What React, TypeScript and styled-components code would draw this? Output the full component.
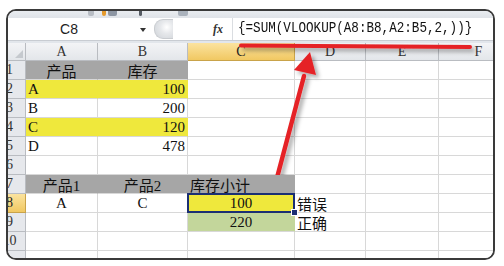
import React from 'react'
import styled, { createGlobalStyle, css } from 'styled-components'

const GlobalStyle = createGlobalStyle`
  html, body {
    margin: 0;
    padding: 0;
    background: #ffffff;
  }
`

const CELL_FONT = `"Liberation Serif", "Noto Sans CJK SC", serif`
const GRID_LINE = '#d8d8d8'
const HEADER_LINE = '#b9bcc1'

const Page = styled.div`
  position: relative;
  width: 504px;
  height: 266px;
  box-sizing: border-box;
  padding: 9px 9px 6px 6px;
  overflow: hidden;
`

const Frame = styled.div`
  height: 100%;
  box-sizing: border-box;
  border: 2px solid #3a3a3a;
  border-radius: 10px;
  overflow: hidden;
  display: flex;
  flex-flow: column nowrap;
  background: #ffffff;
`

const ToolStrip = styled.div`
  height: 7px;
  flex: none;
  display: flex;
  align-items: flex-start;
  gap: 6px;
  padding-left: 80px;
  background: linear-gradient(#e9ecf0, #dfe3e8);
`

const ToolBit = styled.span<{ $w: number; $c: string; $ml?: number }>`
  display: block;
  width: ${p => p.$w}px;
  height: 5px;
  margin-left: ${p => p.$ml ?? 0}px;
  background: ${p => p.$c};
  border-radius: 0 0 2px 2px;
`

const FormulaBar = styled.div`
  height: 22px;
  flex: none;
  display: flex;
  align-items: center;
  background: #ffffff;
  border-bottom: 1px solid #c8ccd2;
`

const NameBox = styled.div`
  position: relative;
  width: 142px;
  height: 100%;
  display: flex;
  align-items: center;
  justify-content: center;
  font-family: "Liberation Sans", Arial, sans-serif;
  font-size: 14px;
  color: #222;
  padding-right: 20px;
  box-sizing: border-box;
`

const DropArrow = styled.span`
  position: absolute;
  right: 4px;
  top: 10px;
  width: 0;
  height: 0;
  border-left: 3.5px solid transparent;
  border-right: 3.5px solid transparent;
  border-top: 4px solid #333;
`

const Grip = styled.div`
  width: 18px;
  height: 18px;
  margin-left: 4px;
  border-radius: 9px 0 0 9px;
  border: 1px solid #c9ccd0;
  border-right: none;
  background: radial-gradient(circle at 65% 40%, #ffffff 0, #e6e8eb 40%, #cfd3d8 100%);
`

const FxButton = styled.div`
  width: 60px;
  height: 100%;
  display: flex;
  align-items: center;
  justify-content: flex-end;
  padding-right: 9px;
  box-sizing: border-box;
  font-family: "Liberation Serif", serif;
  font-style: italic;
  font-weight: bold;
  font-size: 12px;
  color: #333;
  border-right: 1px solid #dadde1;
`

const FormulaText = styled.div`
  flex: 1;
  padding-left: 5px;
  font-family: "Liberation Mono", monospace;
  font-size: 12.6px;
  color: #111;
  white-space: nowrap;
  transform: scaleY(1.15);
`

const Gap = styled.div`
  height: 2px;
  flex: none;
  background: #e2e6eb;
`

const Sheet = styled.div`
  display: grid;
  grid-template-columns: 28px 72px 90px 107px 71px 73px 80px;
  grid-template-rows: 18px repeat(11, 19px);
  margin-left: -10px;
`

const Header = styled.div<{ $active?: boolean; $row?: boolean }>`
  box-sizing: border-box;
  display: flex;
  align-items: center;
  justify-content: center;
  font-family: "Liberation Serif", serif;
  font-size: 14px;
  color: #333;
  border-right: 1px solid ${HEADER_LINE};
  border-bottom: 1px solid ${HEADER_LINE};
  background: linear-gradient(#f3f4f6, #e3e6ea);
  ${p => p.$row && css`
    background: #e6e8ec;
    padding-right: 4px;
  `}
  ${p => p.$active && css`
    background: linear-gradient(#fbe39f, #f1c862);
    border-color: #c9a34a;
    color: #222;
  `}
`

const Corner = styled(Header)`
  position: relative;
  &::after {
    content: '';
    position: absolute;
    right: 2px;
    bottom: 2px;
    border-left: 8px solid transparent;
    border-bottom: 8px solid #c5c9ce;
  }
`

type Align = 'left' | 'center' | 'right'

const Cell = styled.div<{ $bg?: string; $align?: Align; $spill?: boolean }>`
  position: relative;
  box-sizing: border-box;
  display: flex;
  align-items: center;
  justify-content: ${p => (p.$align === 'right' ? 'flex-end' : p.$align === 'center' ? 'center' : 'flex-start')};
  padding: 0 2px;
  font-family: ${CELL_FONT};
  font-size: 15px;
  color: #111;
  white-space: nowrap;
  background: ${p => p.$bg ?? '#ffffff'};
  border-right: 1px solid ${p => (p.$bg ? p.$bg : GRID_LINE)};
  border-bottom: 1px solid ${GRID_LINE};
  ${p => p.$spill && css`
    overflow: visible;
    z-index: 1;
  `}
`

const ActiveCell = styled(Cell)`
  border: 2px solid #1b2f73;
  margin: -1px 0 0 -1px;
  z-index: 2;

  &::after {
    content: '';
    position: absolute;
    right: -5px;
    bottom: -5px;
    width: 5px;
    height: 5px;
    background: #1b2f73;
    border: 1px solid #fff;
  }
`

const Overlay = styled.svg`
  position: absolute;
  left: 0;
  top: 0;
  pointer-events: none;
`

const GRAY = '#a6a6a6'
const YELLOW = '#efe83c'
const GREEN = '#c3d69b'

type CellSpec = { text?: string; bg?: string; align?: Align; active?: boolean }

const blank: CellSpec = {}

const rows: CellSpec[][] = [
  [{ text: '产品', bg: GRAY, align: 'center' }, { text: '库存', bg: GRAY, align: 'center' }, blank, blank, blank, blank],
  [{ text: 'A', bg: YELLOW }, { text: '100', bg: YELLOW, align: 'right' }, blank, blank, blank, blank],
  [{ text: 'B' }, { text: '200', align: 'right' }, blank, blank, blank, blank],
  [{ text: 'C', bg: YELLOW }, { text: '120', bg: YELLOW, align: 'right' }, blank, blank, blank, blank],
  [{ text: 'D' }, { text: '478', align: 'right' }, blank, blank, blank, blank],
  [blank, blank, blank, blank, blank, blank],
  [
    { text: '产品1', bg: GRAY, align: 'center' },
    { text: '产品2', bg: GRAY, align: 'center' },
    { text: '库存小计', bg: GRAY },
    blank, blank, blank,
  ],
  [
    { text: 'A', align: 'center' },
    { text: 'C', align: 'center' },
    { text: '100', bg: YELLOW, align: 'center', active: true },
    { text: '错误' }, blank, blank,
  ],
  [blank, blank, { text: '220', bg: GREEN, align: 'center' }, { text: '正确' }, blank, blank],
  [blank, blank, blank, blank, blank, blank],
  [blank, blank, blank, blank, blank, blank],
]

const columns = ['A', 'B', 'C', 'D', 'E', 'F']

export default function App() {
  return (
    <Page>
      <GlobalStyle />
      <Frame>
        <ToolStrip>
          <ToolBit $w={6} $c="#b7bcc3" />
          <ToolBit $w={4} $c="#e59a2c" $ml={2} />
          <ToolBit $w={9} $c="#8d96a3" $ml={-4} />
          <ToolBit $w={3} $c="#555b63" $ml={16} />
          <ToolBit $w={10} $c="#aab2bc" $ml={30} />
        </ToolStrip>
        <FormulaBar>
          <NameBox>
            C8
            <DropArrow />
          </NameBox>
          <Grip />
          <FxButton>fx</FxButton>
          <FormulaText>{'{=SUM(VLOOKUP(A8:B8,A2:B5,2,))}'}</FormulaText>
        </FormulaBar>
        <Gap />
        <Sheet>
          <Corner />
          {columns.map(c => (
            <Header key={c} $active={c === 'C'}>{c}</Header>
          ))}
          {rows.map((row, r) => (
            <React.Fragment key={r}>
              {/* the last row only peeks out under the frame, its number is hidden */}
              <Header $row $active={r === 7}>{r < 10 ? r + 1 : ''}</Header>
              {row.map((cell, c) =>
                cell.active ? (
                  <ActiveCell key={c} $bg={cell.bg} $align={cell.align}>{cell.text}</ActiveCell>
                ) : (
                  <Cell key={c} $bg={cell.bg} $align={cell.align} $spill={!!cell.text}>{cell.text}</Cell>
                )
              )}
            </React.Fragment>
          ))}
        </Sheet>
      </Frame>
      <Overlay width="504" height="266" viewBox="0 0 504 266">
        <defs>
          <filter id="shade" x="-20%" y="-20%" width="160%" height="160%">
            <feDropShadow dx="3" dy="3" stdDeviation="2" floodColor="#000" floodOpacity="0.35" />
          </filter>
        </defs>
        <g filter="url(#shade)">
          <line x1="241" y1="45.5" x2="470" y2="47" stroke="#e52226" strokeWidth="4" strokeLinecap="round" />
          <line x1="274" y1="189" x2="304" y2="76" stroke="#e52226" strokeWidth="4.5" strokeLinecap="round" />
          <polygon points="310,52 294,70 316,75" fill="#e52226" />
        </g>
      </Overlay>
    </Page>
  )
}
